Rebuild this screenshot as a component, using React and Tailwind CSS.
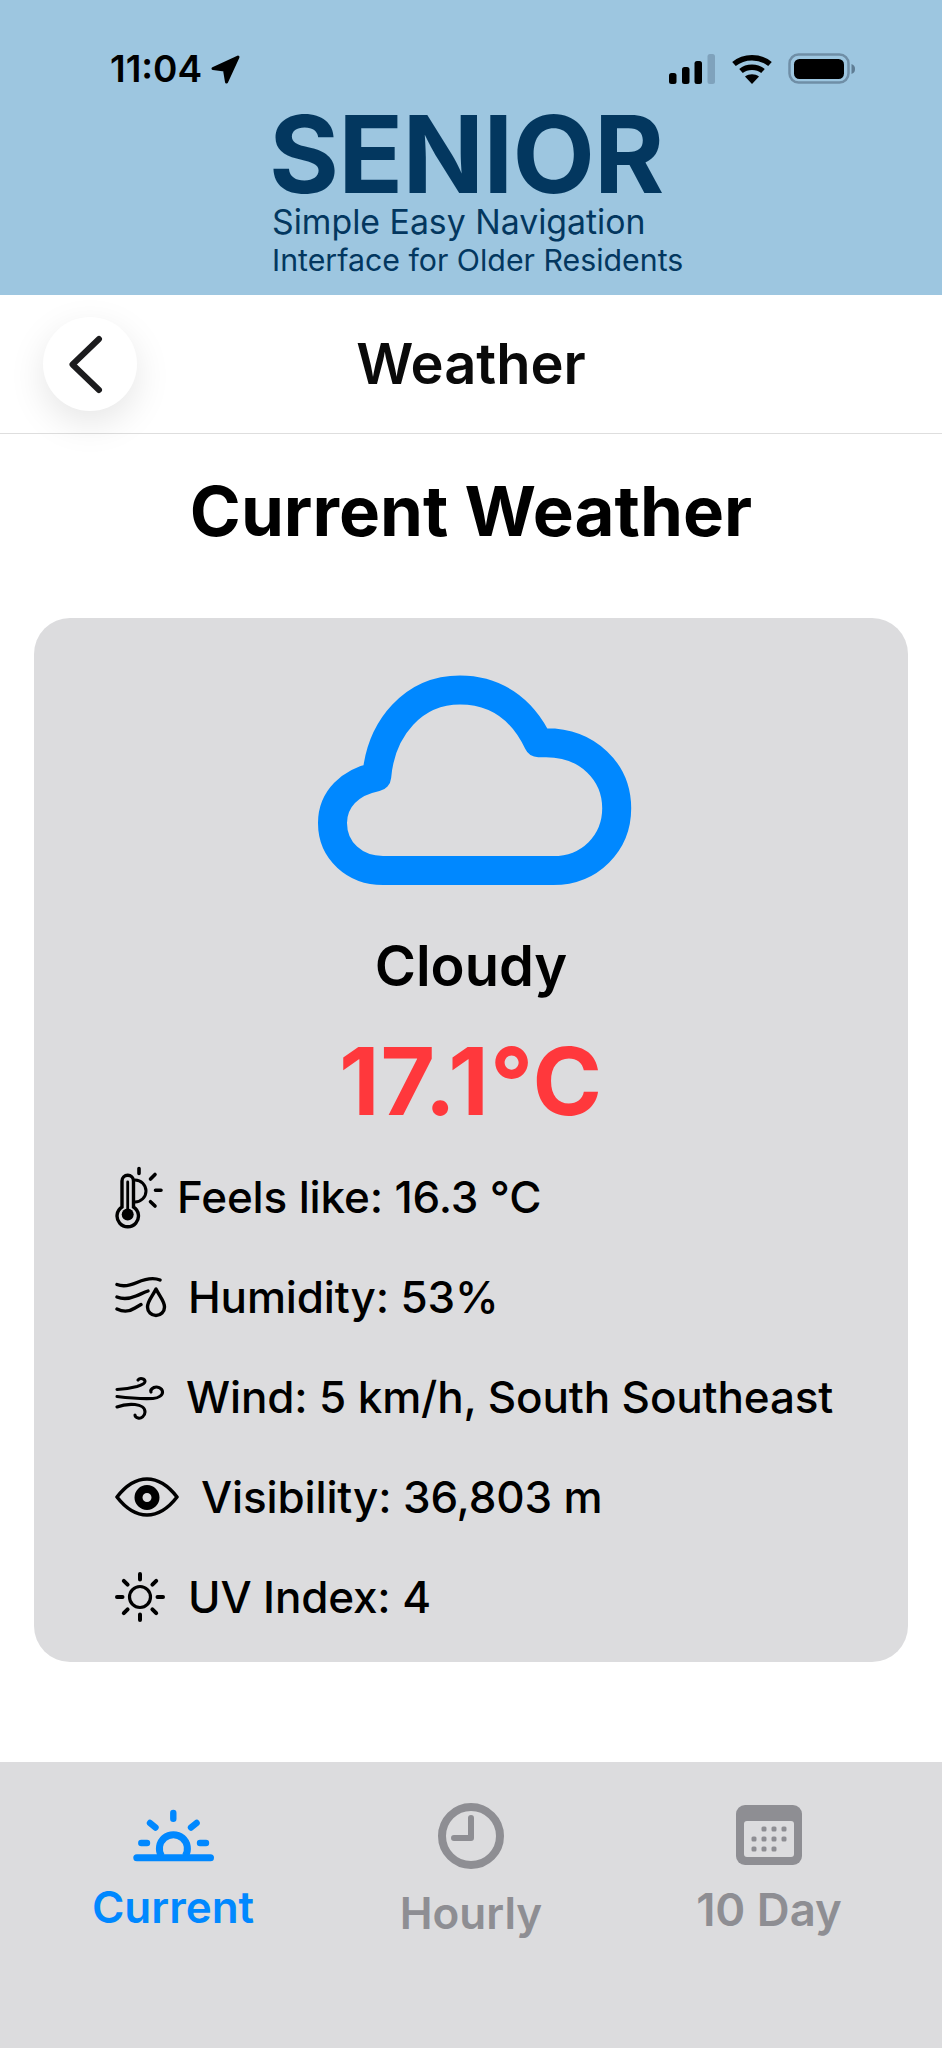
import React from "react";

const font = { fontFamily: "Inter, 'Liberation Sans', sans-serif" };

function Arrow() {
  return (
    <svg width="31" height="31" viewBox="0 0 31 31" className="ml-[8px]">
      <path d="M28 3 L3 14.5 L14.5 16 L16.5 28 Z" fill="#000" stroke="#000" strokeWidth="3" strokeLinejoin="round" />
    </svg>
  );
}
function Signal() {
  return (
    <svg width="48" height="30" viewBox="0 0 48 30">
      <rect x="0" y="19" width="7.5" height="11" rx="2.5" fill="#000" />
      <rect x="13" y="13" width="7.5" height="17" rx="2.5" fill="#000" />
      <rect x="25.5" y="7" width="7.5" height="23" rx="2.5" fill="#000" />
      <rect x="38.5" y="0" width="7.5" height="30" rx="2.5" fill="#7fa2bc" />
    </svg>
  );
}
function Wifi() {
  return (
    <svg width="42" height="30" viewBox="0 0 42 30">
      <path d="M3 10 C13 1.5 29 1.5 39 10" fill="none" stroke="#000" strokeWidth="5.5" strokeLinecap="butt" />
      <path d="M10 17 C16 12 26 12 32 17" fill="none" stroke="#000" strokeWidth="5.5" />
      <path d="M14 22.5 C18 19.5 24 19.5 28 22.5 L21 30 Z" fill="#000" />
    </svg>
  );
}
function Battery() {
  return (
    <svg width="68" height="32" viewBox="0 0 68 32">
      <rect x="1.5" y="1.5" width="59" height="28" rx="9" fill="none" stroke="#6f8ea6" strokeWidth="2.5" />
      <rect x="6" y="6" width="50" height="20" rx="5.5" fill="#000" />
      <path d="M63.5 11 C66.5 12 67 14 67 16 C67 18 66.5 20 63.5 21 Z" fill="#5f7d94" />
    </svg>
  );
}
function Cloud() {
  return (
    <svg width="314" height="211" viewBox="0 0 314 211" className="ml-[8px] block">
      <path
        d="M65 195.5 H235.3 C272 195.5 298.7 168 298.7 133.3 C298.7 97 270 67.7 228 67.7 H220.3 C204 33 176 15 142 15 C96 15 63 52 58.7 101.7 C32 107 14.5 124 14.5 148 C14.5 176 37 195.5 65 195.5 Z"
        fill="none"
        stroke="#0088ff"
        strokeWidth="29"
        strokeLinejoin="round"
      />
    </svg>
  );
}
function Thermo() {
  return (
    <svg width="50" height="64" viewBox="0 0 50 64" fill="none" stroke="#000" strokeWidth="3.4" strokeLinecap="round" className="block">
      <path d="M7 42 V16 a5.75 5.75 0 0 1 11.5 0 V42 a10.7 10.7 0 1 1 -11.5 0 Z" />
      <circle cx="12.7" cy="49.5" r="6" fill="#000" stroke="none" />
      <path d="M12.7 17 V46" strokeWidth="2.8" />
      <path d="M20 15 a11 11 0 0 1 0 22" strokeWidth="3" />
      <path d="M24 3.5 V8.5 M35.5 14 L40 9.5 M40.5 25.3 H46 M35.5 36.7 L40 41" strokeWidth="3.6" />
    </svg>
  );
}
function Humid() {
  return (
    <svg width="52" height="44" viewBox="0 0 52 44" fill="none" stroke="#000" strokeWidth="3.4" strokeLinecap="round" strokeLinejoin="round" className="block">
      <path d="M2 9.5 C8 12 14 11 22 7.5 S38 2 45 5" />
      <path d="M2 22 C8 24.5 14 24 21 21 S30 17 33 16" />
      <path d="M2 34 C8 37 14 37 20 33 L26 29.5" />
      <path d="M41 14 C37 22 32.5 26 32.5 32 a8.5 8.5 0 0 0 17 0 C49.5 26 45 22 41 14 Z" />
    </svg>
  );
}
function Wind() {
  return (
    <svg width="50" height="45" viewBox="0 0 50 45" fill="none" stroke="#000" strokeWidth="3.1" strokeLinecap="round" strokeLinejoin="round" className="block">
      <path d="M2 14.5 C10 14 16 13 22 11.5 C27 10 30 8.5 30 6.5 C30 3.5 25 2.5 23 5" />
      <path d="M2 21.5 C14 23 28 24 38 23.5 C44 23 48 20 47.5 16.5 C47 13 42 11 39 12.5 C36 14 35.5 16 36 17" />
      <path d="M2 32 C8 29.5 14 29 20 29.5 C26 30 30 33 30 37 C30 41 26 44 23 43 C21 42.5 20 41 20 40" />
    </svg>
  );
}
function Eye() {
  return (
    <svg width="64" height="40" viewBox="0 0 64 40" fill="none" stroke="#000" className="block">
      <path d="M2 20 C12 7 22 2 32 2 C42 2 52 7 62 20 C52 33 42 38 32 38 C22 38 12 33 2 20 Z" strokeWidth="3.6" strokeLinejoin="round" />
      <circle cx="32" cy="20.5" r="8.5" strokeWidth="8" />
    </svg>
  );
}
function Sun() {
  return (
    <svg width="52" height="52" viewBox="0 0 52 52" fill="none" stroke="#000" strokeWidth="4" strokeLinecap="round" className="block">
      <circle cx="26" cy="26" r="10.5" strokeWidth="3.2" />
      <path d="M26 3 V8.5 M26 43.5 V49 M3 26 H8.5 M43.5 26 H49 M9.8 9.8 L13.6 13.6 M38.4 38.4 L42.2 42.2 M42.2 9.8 L38.4 13.6 M13.6 38.4 L9.8 42.2" />
    </svg>
  );
}
function SunTab() {
  return (
    <svg width="88" height="62" viewBox="0 0 88 62" fill="none" stroke="#0088ff" strokeWidth="6.4" strokeLinecap="round" className="ml-[2px] block">
      <path d="M6.8 52.7 H80.5" strokeWidth="7" />
      <path d="M31.5 51 A14 14 0 1 1 55.3 51" strokeWidth="7" strokeLinecap="butt" />
      <path d="M43.3 8 V13.7 M20 18 L25.5 22.5 M66.6 18 L61 22.5 M11.3 38 H17 M70 38 H76" />
    </svg>
  );
}
function Clock() {
  return (
    <svg width="68" height="68" viewBox="0 0 68 68" fill="none" stroke="#8e8e93" className="block">
      <circle cx="34" cy="34" r="29" strokeWidth="8" />
      <path d="M34 16 V36 H17" strokeWidth="6" strokeLinecap="round" strokeLinejoin="round" />
    </svg>
  );
}
function Calendar() {
  const dots = [[28, 24], [38, 24], [48, 24], [18, 34], [28, 34], [38, 34], [48, 34], [18, 44], [28, 44], [38, 44]];
  return (
    <svg width="66" height="60" viewBox="0 0 66 60" className="block">
      <rect width="66" height="60" rx="9" fill="#8e8e93" />
      <rect x="8" y="16" width="50" height="36" rx="3" fill="#dcdcde" />
      {dots.map(([x, y]) => (
        <rect key={`${x}-${y}`} x={x - 2.5} y={y - 2.5} width="5" height="5" rx="1.5" fill="#8e8e93" />
      ))}
    </svg>
  );
}

function Row({ icon, gap, children }) {
  return (
    <div className="flex h-[100px] items-center">
      {icon}
      <span className={`${gap} text-[44px] font-[450] leading-[52px] tracking-[-0.15px] text-black whitespace-nowrap`}>{children}</span>
    </div>
  );
}

export default function App() {
  return (
    <div className="flex h-[2048px] w-[942px] flex-col overflow-hidden bg-white" style={font}>
      <header className="h-[295px] shrink-0 bg-[#9dc6e0]">
        <div className="box-content flex h-[30px] items-center justify-between pl-[110px] pr-[86px] pt-[54px]">
          <div className="flex items-center">
            <span className="text-[37px] font-semibold leading-[32px] text-black">11:04</span>
            <Arrow />
          </div>
          <div className="flex items-center">
            <Signal />
            <div className="ml-[14px]"><Wifi /></div>
            <div className="ml-[15px]"><Battery /></div>
          </div>
        </div>
        <div className="pl-[269px] text-[#03375f]">
          <div className="mt-[22px] text-[107px] font-[650] leading-[96px] tracking-[-0.8px]">SENIOR</div>
          <div className="ml-[3px] mt-[1px] text-[33.8px] leading-[38px]">Simple Easy Navigation</div>
          <div className="ml-[3px] mt-px text-[30.3px] leading-[36px]">Interface for Older Residents</div>
        </div>
      </header>

      <nav className="grid h-[139px] shrink-0 grid-cols-[1fr_auto_1fr] items-center border-b border-[#dedede] px-[43px]">
        <button className="flex h-[94px] w-[94px] items-center justify-center rounded-full bg-white shadow-[0_12px_36px_rgba(0,0,0,0.10)]">
          <svg width="44" height="60" viewBox="0 0 44 60" fill="none" stroke="#1c1c1e" strokeWidth="6" strokeLinecap="round" strokeLinejoin="round">
            <path d="M31 5 L4.5 30.5 L31 56" />
          </svg>
        </button>
        <h2 className="text-[56px] font-semibold leading-[64px] text-[#0a0a0a]">Weather</h2>
        <div />
      </nav>

      <main className="flex-1">
        <h1 className="mt-[37px] text-center text-[69px] font-bold leading-[80px] text-black">Current Weather</h1>
        <section className="mx-[34px] mt-[67px] h-[1044px] rounded-[36px] bg-[#dcdcde] pl-[81px] pt-[57px]">
          <div className="-ml-[81px] flex flex-col items-center">
            <Cloud />
            <div className="mt-[48px] text-[56px] font-semibold leading-[64px] text-black">Cloudy</div>
            <div className="mt-[35px] text-[94px] font-bold leading-[96px] tracking-[1px] text-[#ff383c]">17.1°C</div>
          </div>
          <div className="mt-[18px]">
            <Row icon={<Thermo />} gap="ml-[12px]">Feels like: 16.3 °C</Row>
            <Row icon={<Humid />} gap="ml-[21px]">Humidity: 53%</Row>
            <Row icon={<Wind />} gap="ml-[21px]">Wind: 5 km/h, South Southeast</Row>
            <Row icon={<Eye />} gap="ml-[22px]">Visibility: 36,803 m</Row>
            <Row icon={<div className="-ml-px"><Sun /></div>} gap="ml-[22px]">UV Index: 4</Row>
          </div>
        </section>
      </main>

      <footer className="grid h-[286px] shrink-0 grid-cols-3 bg-[#dcdcde] px-[24px] text-[44px] font-semibold leading-[52px]">
        <div className="flex flex-col items-center pt-[43px] text-[#0088ff]">
          <SunTab />
          <span className="mt-[14px]">Current</span>
        </div>
        <div className="flex flex-col items-center pt-[40px] text-[#8e8e93]">
          <Clock />
          <span className="mt-[17px]">Hourly</span>
        </div>
        <div className="flex flex-col items-center pt-[43px] text-[#8e8e93]">
          <Calendar />
          <span className="mt-[19px] text-[45.5px]">10 Day</span>
        </div>
      </footer>
    </div>
  );
}
